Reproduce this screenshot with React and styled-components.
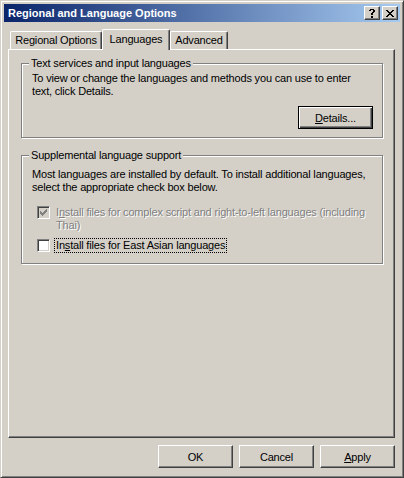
import React from "react";
import styled, { createGlobalStyle } from "styled-components";

const face = "#d4d0c8";

const GlobalStyle = createGlobalStyle`
  html, body {
    margin: 0;
    padding: 0;
    background: ${face};
  }
`;

const HelpGlyph = () => (
  <svg width="6" height="9" viewBox="0 0 6 9">
    <path
      fill="#000"
      d="M1 0h4v1H1zM0 1h2v1H0zM4 1h2v1H4zM4 2h2v1H4zM3 3h2v1H3zM2 4h2v2H2zM2 7h2v2H2z"
    />
  </svg>
);

const CloseGlyph = () => (
  <svg width="8" height="7" viewBox="0 0 8 7">
    <path
      fill="#000"
      d="M0 0h2v1H0zM6 0h2v1H6zM1 1h2v1H1zM5 1h2v1H5zM2 2h4v1H2zM3 3h2v1H3zM2 4h4v1H2zM1 5h2v1H1zM5 5h2v1H5zM0 6h2v1H0zM6 6h2v1H6z"
    />
  </svg>
);

const CheckGlyph = ({ color }) => (
  <svg width="9" height="9" viewBox="0 0 9 9">
    <path
      fill={color}
      d="M1 3h1v3H1zM2 4h1v3H2zM3 5h1v3H3zM4 4h1v3H4zM5 3h1v3H5zM6 2h1v3H6zM7 1h1v3H7z"
    />
  </svg>
);

const CheckRow = ({ checked, disabled, focused, children, top }) => (
  <Row $top={top}>
    <Box $disabled={disabled}>
      {checked && <CheckGlyph color={disabled ? "#808080" : "#000"} />}
    </Box>
    <Label $disabled={disabled} $focused={focused}>
      {children}
    </Label>
  </Row>
);

export default function App() {
  return (
    <>
      <GlobalStyle />
      <Window>
        <TitleBar>
          <Title>Regional and Language Options</Title>
          <CaptionButtons>
            <CaptionButton>
              <HelpGlyph />
            </CaptionButton>
            <CaptionButton>
              <CloseGlyph />
            </CaptionButton>
          </CaptionButtons>
        </TitleBar>
        <Body>
          <Tabs>
            <Tab $w={92}>Regional Options</Tab>
            <Tab $w={68} $active>
              Languages
            </Tab>
            <Tab $w={58}>Advanced</Tab>
          </Tabs>
          <Panel>
            <Group>
              <Legend>Text services and input languages</Legend>
              <Text $top={2}>
                To view or change the languages and methods you can use to enter
                <br />
                text, click Details.
              </Text>
              <GroupActions>
                <Button $default>
                  <u>D</u>etails...
                </Button>
              </GroupActions>
            </Group>
            <Group $top={11} $bottom={10}>
              <Legend>Supplemental language support</Legend>
              <Text $top={6}>
                Most languages are installed by default. To install additional languages,
                <br />
                select the appropriate check box below.
              </Text>
              <CheckRow checked disabled top={11}>
                I<u>n</u>stall files for complex script and right-to-left languages (including
                <br />
                Thai)
              </CheckRow>
              <CheckRow focused top={5}>
                In<u>s</u>tall files for East Asian languages
              </CheckRow>
            </Group>
          </Panel>
          <Footer>
            <Button>OK</Button>
            <Button>Cancel</Button>
            <Button>
              <u>A</u>pply
            </Button>
          </Footer>
        </Body>
      </Window>
    </>
  );
}

const Window = styled.div`
  box-sizing: border-box;
  width: 404px;
  height: 478px;
  display: flex;
  flex-direction: column;
  padding: 3px;
  background: ${face};
  border: 1px solid;
  border-color: ${face} #404040 #404040 ${face};
  box-shadow: inset 1px 1px 0 #fff, inset -1px -1px 0 #808080;
  font-family: "Liberation Sans", Arial, sans-serif;
  font-size: 11px;
  letter-spacing: -0.18px;
  color: #000;
`;

const TitleBar = styled.div`
  height: 18px;
  flex: none;
  display: flex;
  align-items: center;
  padding: 0 2px 0 2px;
  background: linear-gradient(to right, #0a246a, #a6caf0);
`;

const Title = styled.div`
  flex: 1;
  padding-left: 2px;
  color: #fff;
  font-weight: bold;
  letter-spacing: 0;
`;

const CaptionButtons = styled.div`
  display: flex;
  gap: 2px;
`;

const CaptionButton = styled.div`
  box-sizing: border-box;
  width: 16px;
  height: 14px;
  display: flex;
  align-items: center;
  justify-content: center;
  background: ${face};
  border: 1px solid;
  border-color: #fff #404040 #404040 #fff;
  box-shadow: inset -1px -1px 0 #808080;
`;

const Body = styled.div`
  flex: 1;
  display: flex;
  flex-direction: column;
  padding: 7px 5px 6px 4px;
`;

const Tabs = styled.div`
  height: 20px;
  display: flex;
  align-items: flex-end;
  padding-left: 2px;
`;

const Tab = styled.div`
  box-sizing: border-box;
  width: ${({ $w }) => $w}px;
  height: 18px;
  display: flex;
  align-items: center;
  justify-content: center;
  background: ${face};
  border-top: 1px solid #fff;
  border-left: 1px solid #fff;
  border-right: 1px solid #404040;
  border-radius: 2px 2px 0 0;
  box-shadow: inset -1px 0 0 #808080;
  padding-bottom: 1px;

  ${({ $active }) =>
    $active &&
    `
    height: 21px;
    margin-bottom: -1px;
    position: relative;
    z-index: 1;
    padding-bottom: 3px;
  `}
`;

const Panel = styled.div`
  flex: 1;
  display: flex;
  flex-direction: column;
  padding: 7px 11px 0 12px;
  border: 1px solid;
  border-color: #fff #404040 #404040 #fff;
  box-shadow: inset -1px -1px 0 #808080;
`;

const Group = styled.fieldset`
  margin: ${({ $top }) => $top || 0}px 0 0;
  padding: 0 9px ${({ $bottom }) => ($bottom === undefined ? 8 : $bottom)}px 10px;
  min-width: 0;
  border: 1px solid #808080;
  box-shadow: inset 1px 1px 0 #fff, 1px 1px 0 #fff;
`;

const Legend = styled.legend`
  margin-left: -3px;
  padding: 0 2px;
  line-height: 13px;
  background: ${face};
`;

const Text = styled.div`
  margin-top: ${({ $top }) => $top}px;
  line-height: 13px;
  white-space: nowrap;
`;

const GroupActions = styled.div`
  display: flex;
  justify-content: flex-end;
  margin-top: 8px;
`;

const Button = styled.div`
  box-sizing: border-box;
  width: 75px;
  height: 23px;
  display: flex;
  align-items: center;
  justify-content: center;
  background: ${face};
  border: 1px solid;
  border-color: #fff #404040 #404040 #fff;
  box-shadow: inset -1px -1px 0 #808080;

  ${({ $default }) =>
    $default &&
    `
    border: 1px solid #000;
    box-shadow: inset 1px 1px 0 #fff, inset -1px -1px 0 #404040, inset -2px -2px 0 #808080;
  `}
`;

const Row = styled.div`
  display: flex;
  align-items: flex-start;
  margin-top: ${({ $top }) => $top}px;
  padding-left: 5px;
`;

const Box = styled.div`
  box-sizing: border-box;
  flex: none;
  width: 13px;
  height: 13px;
  margin-top: 1px;
  margin-right: 4px;
  display: flex;
  align-items: center;
  justify-content: center;
  background: ${({ $disabled }) => ($disabled ? face : "#fff")};
  border: 1px solid;
  border-color: #808080 #fff #fff #808080;
  box-shadow: inset 1px 1px 0 #404040, inset -1px -1px 0 ${face};
`;

const Label = styled.div`
  line-height: 13px;
  padding: 0 1px;
  white-space: nowrap;
  border: 1px ${({ $focused }) => ($focused ? "dotted #000" : "solid transparent")};
  color: ${({ $disabled }) => ($disabled ? "#808080" : "#000")};
  text-shadow: ${({ $disabled }) => ($disabled ? "1px 1px 0 #fff" : "none")};
`;

const Footer = styled.div`
  display: flex;
  justify-content: flex-end;
  gap: 6px;
  margin-top: 7px;
`;
